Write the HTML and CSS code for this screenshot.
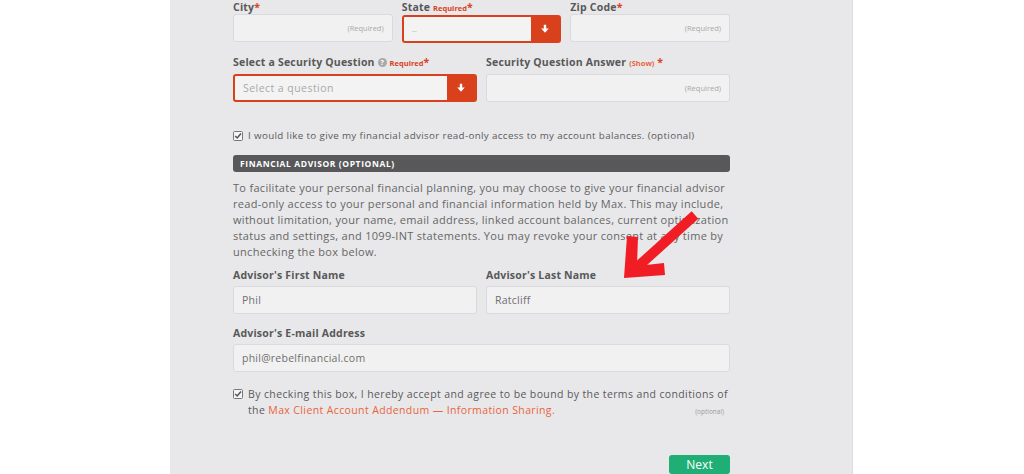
FILE: index.html
```html
<!DOCTYPE HTML><html>
<head>
	<meta name="viewport" charset="UTF-8" content="width=device-width, initial-scale=1">
	<title>Max - Sign up</title>
	<link rel="stylesheet" href="styles.css">
</head>
<body>
	<div class="panel">
		<div class="form">
			<div class="row grid3 top">
				<div class="field">
					<label>City<span class="star">*</span></label>
					<div class="box"><span class="req">(Required)</span></div>
				</div>
				<div class="field">
					<label>State <span class="reqtag">Required</span><span class="star">*</span></label>
					<div class="select"><span class="ph">--</span><span class="drop"><svg width="10" height="10" viewBox="0 0 10 10"><path d="M3.8 0.8h2.4v3.8h2.6L5 8.8 1.2 4.6h2.6z" fill="#fff"/></svg></span></div>
				</div>
				<div class="field">
					<label>Zip Code<span class="star">*</span></label>
					<div class="box"><span class="req">(Required)</span></div>
				</div>
			</div>

			<div class="row grid2">
				<div class="field">
					<label>Select a Security Question <span class="help">?</span> <span class="reqtag">Required</span><span class="star">*</span></label>
					<div class="select"><span class="ph big">Select a question</span><span class="drop"><svg width="10" height="10" viewBox="0 0 10 10"><path d="M3.8 0.8h2.4v3.8h2.6L5 8.8 1.2 4.6h2.6z" fill="#fff"/></svg></span></div>
				</div>
				<div class="field">
					<label>Security Question Answer <span class="show">(Show)</span> <span class="star">*</span></label>
					<div class="box"><span class="req">(Required)</span></div>
				</div>
			</div>

			<div class="check first">
				<svg class="tick" width="10" height="10" viewBox="0 0 10 10"><rect x="0.5" y="0.5" width="9" height="9" rx="1" fill="#f4f4f4" stroke="#777"/><path d="M2.2 5l2 2 3.8-4.6" fill="none" stroke="#555" stroke-width="1.5"/></svg>
				<span>I would like to give my financial advisor read-only access to my account balances. (optional)</span>
			</div>

			<div class="bar">FINANCIAL ADVISOR (OPTIONAL)</div>

			<p class="info">To facilitate your personal financial planning, you may choose to give your financial advisor<br>read-only access to your personal and financial information held by Max. This may include,<br>without limitation, your name, email address, linked account balances, current optimization<br>status and settings, and 1099-INT statements. You may revoke your consent at any time by<br>unchecking the box below.</p>

			<div class="row grid2 advisor">
				<div class="field">
					<label>Advisor's First Name</label>
					<div class="box"><span class="val">Phil</span></div>
				</div>
				<div class="field">
					<label>Advisor's Last Name</label>
					<div class="box"><span class="val">Ratcliff</span></div>
				</div>
			</div>

			<div class="row">
				<div class="field">
					<label>Advisor's E-mail Address</label>
					<div class="box"><span class="val">phil@rebelfinancial.com</span></div>
				</div>
			</div>

			<div class="check terms">
				<svg class="tick" width="10" height="10" viewBox="0 0 10 10"><rect x="0.5" y="0.5" width="9" height="9" rx="1" fill="#f4f4f4" stroke="#777"/><path d="M2.2 5l2 2 3.8-4.6" fill="none" stroke="#555" stroke-width="1.5"/></svg>
				<div class="terms-text">
					<span>By checking this box, I hereby accept and agree to be bound by the terms and conditions of</span>
					<div class="line2"><span>the <a href="#">Max Client Account Addendum &mdash; Information Sharing.</a></span><span class="opt">(optional)</span></div>
				</div>
			</div>

			<div class="actions"><button class="next">Next</button></div>
		</div>
	</div>

	<!-- annotation arrow drawn over the screenshot -->
	<svg class="arrow" width="90" height="80" viewBox="0 0 90 80">
		<line x1="80" y1="10" x2="19" y2="65" stroke="#f01d24" stroke-width="10"/>
		<path d="M12 31 L23 32 L22 61 L49 58 L50 70 L9 73 Z" fill="#f01d24"/>
	</svg>
</body>
</html>
```

FILE: styles.css
```css
html {
	font-family: "Open Sans", Arial, sans-serif;
}
body {
	margin: 0;
	background-color: #ffffff;
	height: 474px;
	overflow: hidden;
}
.panel {
	width: 683px;
	height: 474px;
	margin-left: 170px;
	padding-left: 63px;
	box-sizing: border-box;
	background-color: #e8e8ea;
	border-right: 1px solid #dcdce0;
	overflow: hidden;
}
.form {
	width: 497px;
	padding-top: 2px;
}
.grid3 {
	display: grid;
	grid-template-columns: repeat(3, 1fr);
	column-gap: 9px;
}
.grid2 {
	display: grid;
	grid-template-columns: 1fr 1fr;
	column-gap: 9px;
}
.row + .row {margin-top: 11px;}
.row.advisor {margin-top: 7px;}

.field label {
	display: block;
	font-size: 10.5px;
	font-weight: 700;
	line-height: 16px;
	letter-spacing: 0.2px;
	color: #585858;
	margin-bottom: 3px;
	white-space: nowrap;
}
.row.top label {
	line-height: 10px;
	margin-bottom: 2px;
}
.star {color: #d9401c;}
.reqtag {
	font-size: 7.5px;
	color: #d9401c;
	font-weight: 700;
	letter-spacing: 0;
}
.show {
	font-size: 7.5px;
	color: #e8643a;
	font-weight: 700;
	letter-spacing: 0;
}
.help {
	display: inline-block;
	width: 9px;
	height: 9px;
	border-radius: 50%;
	background: #a9a9ab;
	color: #fff;
	font-size: 7px;
	line-height: 9px;
	text-align: center;
	letter-spacing: 0;
	vertical-align: 1px;
}

.box {
	height: 28px;
	box-sizing: border-box;
	background: #f1f1f2;
	border: 1px solid #dadadc;
	border-radius: 3px;
	display: flex;
	align-items: center;
	padding: 0 8px;
}
.req {
	margin-left: auto;
	font-size: 7.5px;
	color: #a8a8a8;
}
.val {
	font-size: 10.5px;
	letter-spacing: 0.25px;
	color: #6f6f6f;
}

.select {
	height: 28px;
	box-sizing: border-box;
	display: flex;
	border: 2px solid #d9401c;
	border-radius: 3px;
	background: #f3f3f4;
}
.select .ph {
	flex: 1;
	display: flex;
	align-items: center;
	padding-left: 8px;
	font-size: 8px;
	color: #b5b5b5;
}
.select .ph.big {
	font-size: 10.5px;
	letter-spacing: 0.45px;
	color: #a9a9a9;
}
.drop {
	width: 28px;
	background: #d9401c;
	display: flex;
	align-items: center;
	justify-content: center;
}

.check {
	display: flex;
	align-items: flex-start;
	gap: 5px;
	color: #5a5a5a;
	line-height: 16px;
}
.check .tick {
	flex: none;
	margin-top: 3px;
}
.check.first {
	margin-top: 26px;
	font-size: 9.8px;
	letter-spacing: 0.35px;
}
.check.terms {
	margin-top: 14px;
	font-size: 10.5px;
	letter-spacing: 0.38px;
}
.terms-text {
	flex: 1;
	white-space: nowrap;
}
.line2 {
	display: flex;
	justify-content: space-between;
	align-items: baseline;
}
.line2 a {
	color: #e8643a;
	text-decoration: none;
}
.opt {
	font-size: 6.5px;
	letter-spacing: 0;
	color: #9a9a9a;
	margin-right: 6px;
}

.bar {
	margin-top: 11px;
	height: 17px;
	line-height: 17px;
	background: #58585a;
	border-radius: 3px;
	color: #ffffff;
	font-size: 8.5px;
	font-weight: 700;
	letter-spacing: 0.6px;
	padding-left: 7px;
}
.info {
	margin: 8px 0 0 0;
	font-size: 11px;
	letter-spacing: 0.3px;
	line-height: 16px;
	color: #666666;
	white-space: nowrap;
}

.actions {
	margin-top: 35px;
	display: flex;
	justify-content: flex-end;
}
.next {
	width: 61px;
	height: 19px;
	border: none;
	border-radius: 3px;
	background: #1fae76;
	color: #ffffff;
	font-family: inherit;
	font-size: 12px;
	line-height: 14px;
	padding: 0;
}

.arrow {
	position: absolute;
	left: 615px;
	top: 205px;
}
```
